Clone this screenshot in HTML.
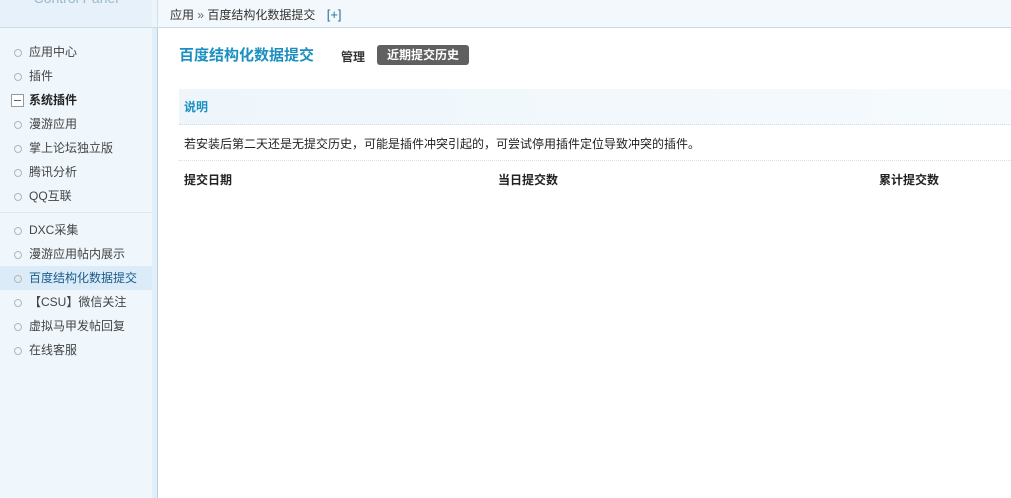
<!DOCTYPE html>
<html><head><meta charset="utf-8"><style>
*{margin:0;padding:0;box-sizing:border-box}
body{width:1011px;height:498px;overflow:hidden;background:#fff;font:12px "Liberation Sans","Noto Sans CJK SC",sans-serif;color:#333;position:relative}
.top{position:absolute;left:0;top:0;width:1011px;height:28px;background:#f2f8fc;border-bottom:1px solid #c9dbe6}
.logo{position:absolute;left:0;top:0;width:152px;height:27px;background:#e6f1f9;color:#9bb8cc;font-size:14px;text-align:center;line-height:0;}
.logo span{position:relative;top:-2px}
.crumb{position:absolute;left:170px;top:6px;font-size:12px;color:#333}
.crumb b{color:#2a6ea1;font-weight:normal;margin-left:8px;font-size:13px}
.side{position:absolute;left:0;top:28px;width:152px;height:470px;background:#eff7fc}
.gap{position:absolute;left:152px;top:28px;width:6px;height:470px;background:#e2eef8;border-right:1px solid #b6d0e2}
.gap2{position:absolute;left:152px;top:0;width:6px;height:27px;background:#eef5fa;border-right:1px solid #cfe0ec}
.side ul{list-style:none;position:absolute;left:0;width:152px}
.side li{height:24px;line-height:24px;padding-left:29px;position:relative;color:#444;font-size:12px}
.side li:before{content:"";position:absolute;left:14px;top:9px;width:6px;height:6px;border:1px solid #b5b5b5;border-radius:50%}
.side li.h{font-weight:bold;color:#222}
.side li.h:before{border-radius:0;width:11px;height:11px;left:11px;top:6px;border:1px solid #999;background:linear-gradient(#666,#666) center/7px 1px no-repeat #fff}
.side li.on{background:#dbecf8;color:#1b5a8a}
.sep{position:absolute;left:0;top:184px;width:152px;height:1px;background:#dde8f0}
.title{position:absolute;left:179px;top:44px;font-size:15px;font-weight:bold;color:#1b8fc0}
.t2{position:absolute;left:341px;top:48px;font-weight:bold;color:#333}
.btn{position:absolute;left:377px;top:45px;height:20px;width:92px;background:#606060;color:#fff;font-weight:bold;border-radius:3px;text-align:center;line-height:20px;font-size:12px}
.hd{position:absolute;left:179px;top:89px;width:832px;height:36px;background:linear-gradient(90deg,#eef6fc,#f6fafd);border-bottom:1px dotted #cfdde8;color:#1b8fc0;font-weight:bold;line-height:36px;padding-left:5px}
.desc{position:absolute;left:184px;top:135px;font-size:12px;color:#222}
.line{position:absolute;left:179px;top:160px;width:832px;border-top:1px dotted #d6e2ea}
.th{position:absolute;top:171px;font-weight:bold;color:#222}
</style></head><body>
<div class="top"><div class="logo"><span>Control Panel</span></div><div class="gap2"></div>
<div class="crumb">应用 <span style="color:#666">»</span> 百度结构化数据提交 <b>[+]</b></div></div>
<div class="side">
<ul style="top:12px">
<li>应用中心</li><li>插件</li><li class="h">系统插件</li><li>漫游应用</li><li>掌上论坛独立版</li><li>腾讯分析</li><li>QQ互联</li>
</ul>
<div class="sep"></div>
<ul style="top:190px">
<li>DXC采集</li><li>漫游应用帖内展示</li><li class="on">百度结构化数据提交</li><li>【CSU】微信关注</li><li>虚拟马甲发帖回复</li><li>在线客服</li>
</ul>
</div>
<div class="gap"></div>
<div class="title">百度结构化数据提交</div>
<div class="t2">管理</div>
<div class="btn">近期提交历史</div>
<div class="hd">说明</div>
<div class="desc">若安装后第二天还是无提交历史，可能是插件冲突引起的，可尝试停用插件定位导致冲突的插件。</div>
<div class="line"></div>
<div class="th" style="left:184px">提交日期</div>
<div class="th" style="left:498px">当日提交数</div>
<div class="th" style="left:879px">累计提交数</div>
</body></html>
